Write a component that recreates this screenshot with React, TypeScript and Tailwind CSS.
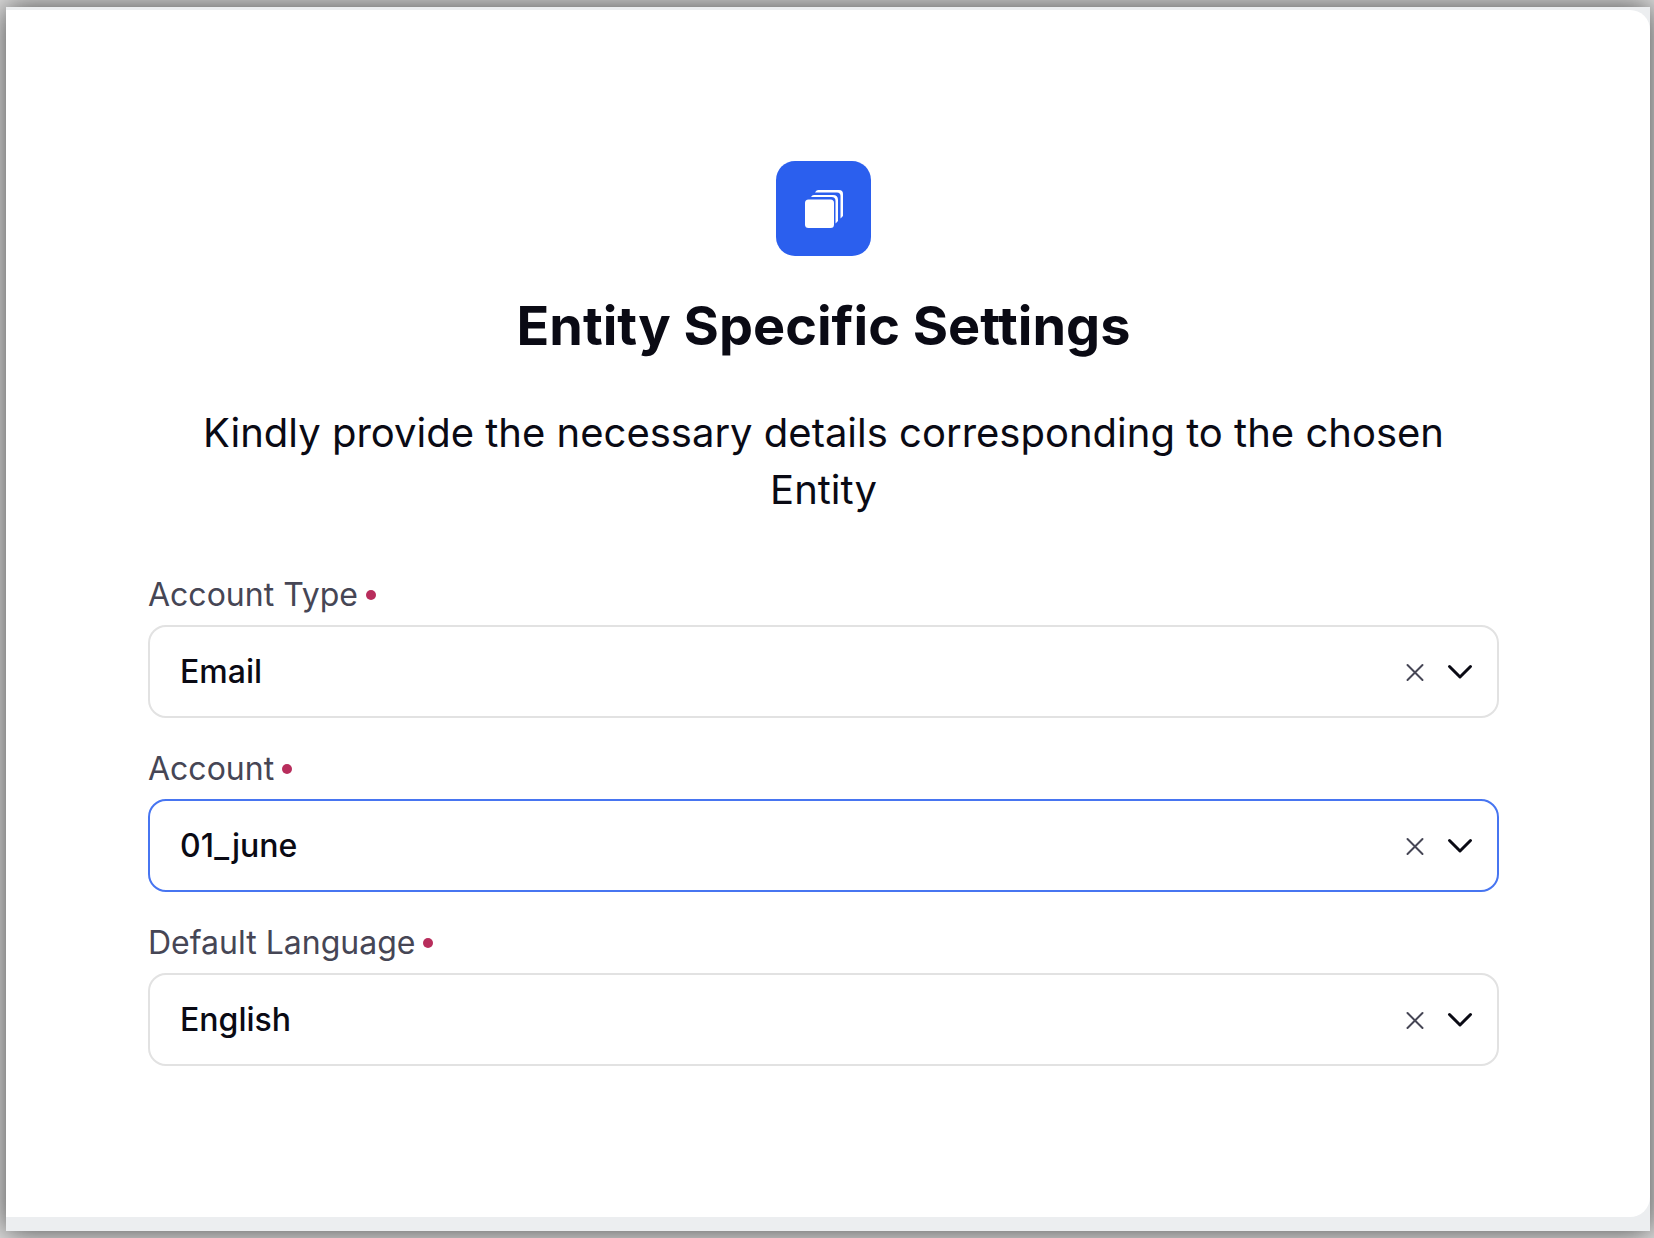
import { useId } from "react";

type FieldProps = { label: string; value: string; active?: boolean };

function Field({ label, value, active }: FieldProps) {
  const id = useId();
  return (
    <div className="flex flex-col gap-1.5">
      <div className="flex items-center gap-2">
        <label htmlFor={id} className="text-[32px] leading-12 text-[#464655]">
          {label}
        </label>
        <span className="size-2.5 rounded-full bg-[#b82d5c]" aria-hidden="true" />
      </div>
      <div
        className={
          active
            ? "flex h-[93px] items-center rounded-[18px] border-2 border-[#4775f1] pr-6"
            : "flex h-[93px] items-center rounded-[18px] border-2 border-[#e2e2e2] pr-6"
        }
      >
        <select
          id={id}
          defaultValue={value}
          className="h-full min-w-0 flex-1 appearance-none bg-transparent pl-[30px] text-[32px] font-medium text-[#0a0a14] outline-none"
        >
          <option value={value}>{value}</option>
        </select>
        <button type="button" aria-label={`Clear ${label}`} className="mr-[22px] flex size-5 items-center justify-center">
          <svg viewBox="0 0 20 20" className="size-5" fill="none" stroke="#464655" strokeWidth="2" strokeLinecap="round">
            <path d="M2.5 3 17.5 18M17.5 3 2.5 18" />
          </svg>
        </button>
        <svg viewBox="0 0 26 20" className="h-5 w-[26px]" fill="none" stroke="#0a0a14" strokeWidth="3" strokeLinecap="round" strokeLinejoin="round" aria-hidden="true">
          <path d="M2.5 4.500 13 15 23.5 4.500" />
        </svg>
      </div>
    </div>
  );
}

export default function App() {
  return (
    <div className="flex min-h-screen flex-col overflow-hidden bg-[#dcdcdc] pt-[7px] pr-1 pb-[7px] pl-1.5 font-['Inter',sans-serif]">
      <div className="flex flex-1 flex-col bg-[#eceef0] pt-[3px] pb-[14px] shadow-[0_0_28px_rgba(0,0,0,0.68)]">
        <main className="flex flex-1 flex-col rounded-r-[20px] bg-white pt-[151px] pr-[151px] pl-[142px]">
          <div className="flex size-[95px] items-center justify-center self-center rounded-[19px] bg-[#2b5fee]">
            <svg viewBox="0 0 40 40" className="size-10" aria-hidden="true">
              <rect x="1" y="10.500" width="29" height="28.500" rx="3.500" fill="#fff" />
              <path d="M7 8Q8 6 10 6H29Q34 6 34 11V32L31.500 34.500V12Q31.500 8 27.500 8Z" fill="#fff" />
              <path d="M11 3.500Q12 1 14 1H35Q39 1 39 5V27L36.500 29.500V7Q36.500 3.500 33 3.500Z" fill="#fff" />
            </svg>
          </div>
          <h1 className="mt-9 text-center text-[54px] leading-[68px] font-bold text-[#0a0a14]">Entity Specific Settings</h1>
          <p className="mt-11 px-8 text-center text-[40px] leading-[57px] text-[#0a0a14]">
            Kindly provide the necessary details corresponding to the chosen Entity
          </p>
          <form className="mt-[53px] flex flex-col gap-[27px]">
            <Field label="Account Type" value="Email" />
            <Field label="Account" value="01_june" active />
            <Field label="Default Language" value="English" />
          </form>
        </main>
      </div>
    </div>
  );
}
